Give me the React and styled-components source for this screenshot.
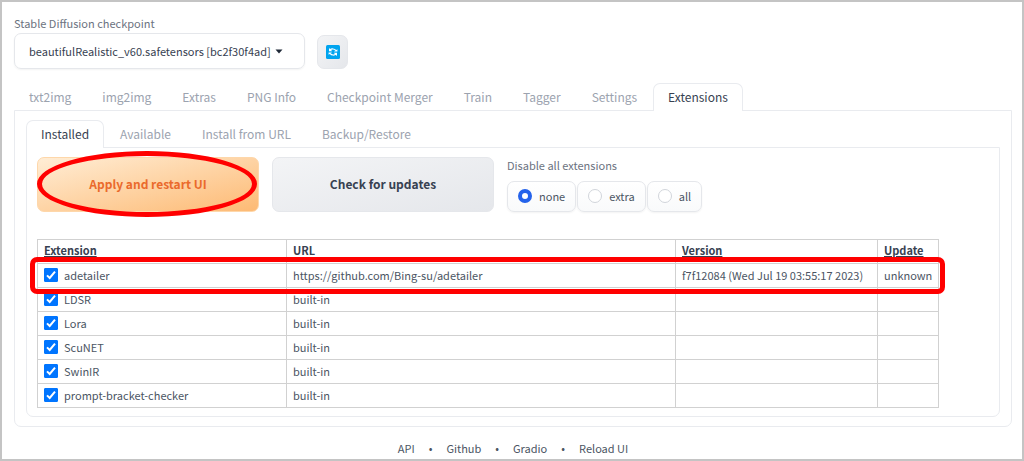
import React, { useState } from "react";
import styled, { createGlobalStyle, css } from "styled-components";

const GlobalStyle = createGlobalStyle`
  *, *::before, *::after { box-sizing: border-box; }
  body {
    margin: 0;
    background: #fff;
    color: #4b5563;
    font-family: "Source Sans Pro", "Noto Sans CJK JP", "Noto Sans", sans-serif;
    font-size: 11px;
    line-height: 16px;
  }
  button, select, input { font: inherit; color: inherit; margin: 0; }
`;

const Page = styled.div`
  min-height: 100vh;
  border: 2px solid #c4c4c4;
  padding: 13px 10px 3px 12px;
`;

const TopBar = styled.div`
  display: flex;
  align-items: flex-end;
  gap: 12px;
`;

const Label = styled.label`
  display: block;
  color: #6b7280;
`;

const SelectFrame = styled.div`
  display: grid;
  align-items: center;
  margin-top: 2px;
  border: 1px solid #e5e7eb;
  border-radius: 7px;
  box-shadow: 0 1px 2px rgba(0, 0, 0, 0.05);
  width: 291px;
  height: 36px;
`;

const Select = styled.select`
  grid-area: 1 / 1;
  appearance: none;
  height: 100%;
  width: 100%;
  border: 0;
  background: transparent;
  padding: 0 24px 1px 14px;
  color: #374151;
`;

const Caret = styled.svg`
  grid-area: 1 / 1;
  justify-self: end;
  margin-right: 21px;
  pointer-events: none;
`;

const RefreshButton = styled.button`
  display: grid;
  place-items: center;
  width: 31px;
  height: 34px;
  padding: 0;
  border: 1px solid #e5e7eb;
  border-radius: 7px;
  background: linear-gradient(to bottom right, #f3f4f6, #e5e7eb);
`;

const TabList = styled.div`
  display: flex;
  gap: 1px;
  position: relative;
  margin-bottom: -1px;
`;

const Tab = styled.button`
  height: 28px;
  padding: 0 14px 1px;
  border: 1px solid transparent;
  border-bottom: 0;
  border-radius: 7px 7px 0 0;
  background: transparent;
  color: #9ca3af;
  font-size: 12px;
  white-space: nowrap;
  ${(p) =>
    p["aria-selected"] &&
    css`
      border-color: #e9ebef;
      background: #fff;
      color: #374151;
    `}
`;

const Panel = styled.section`
  border: 1px solid #e9ebef;
  border-radius: 0 0 7px 7px;
  padding: ${(p) => (p.$inner ? "9px 10px 8px" : "9px 11px")};
`;

const MainTabs = styled.div`
  margin-top: 14px;
`;

const Actions = styled.div`
  display: grid;
  grid-template-columns: 222px 222px 1fr;
  gap: 13px;
`;

const ActionButton = styled.button`
  position: relative;
  height: 55px;
  padding-bottom: 2px;
  border-radius: 7px;
  font-size: 12px;
  font-weight: 700;
  border: 1px solid ${(p) => (p.$primary ? "#fed7aa" : "#e5e7eb")};
  color: ${(p) => (p.$primary ? "#ea6a2c" : "#374151")};
  background: ${(p) =>
    p.$primary
      ? "linear-gradient(to bottom right, #ffedd5, #fdba74)"
      : "linear-gradient(to bottom right, #f3f4f6, #e5e7eb)"};
`;

const EllipseMark = styled.span`
  position: absolute;
  inset: -7px 1px -6px -1px;
  border: 5px solid #f00;
  border-radius: 50%;
  pointer-events: none;
`;

const RadioGroup = styled.fieldset`
  border: 0;
  margin: 0;
  padding: 0;
  min-width: 0;
`;

const Legend = styled.legend`
  padding: 0;
  color: #6b7280;
`;

const Choices = styled.div`
  display: flex;
  gap: 1px;
  margin-top: 8px;
`;

const Choice = styled.label`
  display: flex;
  align-items: center;
  gap: 7px;
  height: 31px;
  padding: 0 10px 1px;
  border: 1px solid #e5e7eb;
  border-radius: 7px;
  background: linear-gradient(to top, #f9fafb, #fff);
  box-shadow: 0 1px 2px rgba(0, 0, 0, 0.05);
  color: #4b5563;
`;

const Radio = styled.input`
  appearance: none;
  width: 14px;
  height: 14px;
  border: 1px solid #d1d5db;
  border-radius: 50%;
  background: #fff;
  &:checked {
    border: 4px solid #2563eb;
  }
`;

const TableArea = styled.div`
  position: relative;
  margin: 27px 50px 0 0;
`;

const Table = styled.table`
  width: 100%;
  border-collapse: collapse;
  table-layout: fixed;
`;

const Column = styled.col`
  width: ${(p) => p.$width};
`;

const cell = css`
  height: 24px;
  padding: 0 6px 1px;
  border: 1px solid #d1d1d1;
  text-align: left;
  white-space: nowrap;
`;

const HeadCell = styled.th`
  ${cell}
  padding-bottom: 4px;
  color: #374151;
  text-decoration: ${(p) => (p.$sortable ? "underline" : "none")};
  text-underline-offset: 1px;
`;

const Cell = styled.td`
  ${cell}
`;

const CheckLabel = styled.label`
  display: flex;
  align-items: center;
  gap: 6px;
`;

const CheckFrame = styled.span`
  display: grid;
  width: 14px;
  height: 14px;
`;

const CheckInput = styled.input`
  grid-area: 1 / 1;
  appearance: none;
  width: 14px;
  height: 14px;
  border: 1px solid #9ca3af;
  border-radius: 1px;
  &:checked {
    border-color: #0075ff;
    background: #0075ff;
  }
`;

const CheckMark = styled.svg`
  grid-area: 1 / 1;
  pointer-events: none;
`;

const RowMark = styled.div`
  position: absolute;
  top: 18px;
  left: -7px;
  right: -6px;
  height: 37px;
  border: 5px solid #f00;
  border-radius: 7px;
  pointer-events: none;
`;

const Footer = styled.footer`
  display: flex;
  justify-content: center;
  gap: 14px;
  margin-top: 13px;
`;

const FooterLink = styled.a`
  color: #4b5563;
  text-decoration: none;
`;

const mainTabs = ["txt2img", "img2img", "Extras", "PNG Info", "Checkpoint Merger", "Train", "Tagger", "Settings", "Extensions"];
const subTabs = ["Installed", "Available", "Install from URL", "Backup/Restore"];
const extensions = [
  { name: "adetailer", url: "https://github.com/Bing-su/adetailer", version: "f7f12084 (Wed Jul 19 03:55:17 2023)", update: "unknown" },
  { name: "LDSR", url: "built-in" },
  { name: "Lora", url: "built-in" },
  { name: "ScuNET", url: "built-in" },
  { name: "SwinIR", url: "built-in" },
  { name: "prompt-bracket-checker", url: "built-in" },
];
const links = ["API", "Github", "Gradio", "Reload UI"];

function Tabs({ items, value, onChange, label }) {
  return (
    <TabList role="tablist" aria-label={label}>
      {items.map((item) => (
        <Tab key={item} type="button" role="tab" aria-selected={item === value} onClick={() => onChange(item)}>
          {item}
        </Tab>
      ))}
    </TabList>
  );
}

function ExtensionCheck({ name }) {
  return (
    <CheckLabel>
      <CheckFrame>
        <CheckInput type="checkbox" defaultChecked />
        <CheckMark width="14" height="14" viewBox="0 0 14 14" fill="none" aria-hidden="true">
          <path d="M3 7.4 5.7 10 11 3.6" stroke="#fff" strokeWidth="2" />
        </CheckMark>
      </CheckFrame>
      {name}
    </CheckLabel>
  );
}

export default function App() {
  const [tab, setTab] = useState("Extensions");
  const [subTab, setSubTab] = useState("Installed");
  const [disabled, setDisabled] = useState("none");

  return (
    <>
      <GlobalStyle />
      <Page>
        <TopBar>
          <div>
            <Label htmlFor="checkpoint">Stable Diffusion checkpoint</Label>
            <SelectFrame>
              <Select id="checkpoint">
                <option>beautifulRealistic_v60.safetensors [bc2f30f4ad]</option>
              </Select>
              <Caret width="8" height="5" viewBox="0 0 8 5" aria-hidden="true">
                <path d="M0.5 0.5h7L4 4.5z" fill="#1f2937" />
              </Caret>
            </SelectFrame>
          </div>
          <RefreshButton type="button" aria-label="Refresh checkpoints">
            <svg width="14" height="14" viewBox="0 0 14 14" fill="none" aria-hidden="true">
              <rect width="14" height="14" rx="1.5" fill="#00a4ef" />
              <path d="M4 5.2C5.2 3.6 8.6 3.4 9.8 5.6M10 8.8C8.8 10.4 5.4 10.6 4.2 8.4" stroke="#fff" strokeWidth="1.2" />
              <path d="M3 3v3.3h3.3zM11 11V7.7H7.7zM8 6.4h3.4V4.2zM6 7.6H2.6v2.2z" fill="#fff" />
            </svg>
          </RefreshButton>
        </TopBar>

        <MainTabs>
          <Tabs items={mainTabs} value={tab} onChange={setTab} label="Main" />
          <Panel role="tabpanel">
            <Tabs items={subTabs} value={subTab} onChange={setSubTab} label="Extensions" />
            <Panel $inner role="tabpanel">
              <Actions>
                <ActionButton type="button" $primary>
                  Apply and restart UI
                  <EllipseMark />
                </ActionButton>
                <ActionButton type="button">Check for updates</ActionButton>
                <RadioGroup>
                  <Legend>Disable all extensions</Legend>
                  <Choices>
                    {["none", "extra", "all"].map((choice) => (
                      <Choice key={choice}>
                        <Radio type="radio" name="disable" checked={disabled === choice} onChange={() => setDisabled(choice)} />
                        {choice}
                      </Choice>
                    ))}
                  </Choices>
                </RadioGroup>
              </Actions>

              <TableArea>
                <Table>
                  <colgroup>
                    <Column $width="249px" />
                    <Column />
                    <Column $width="202px" />
                    <Column $width="61px" />
                  </colgroup>
                  <thead>
                    <tr>
                      <HeadCell $sortable>Extension</HeadCell>
                      <HeadCell>URL</HeadCell>
                      <HeadCell $sortable>Version</HeadCell>
                      <HeadCell $sortable>Update</HeadCell>
                    </tr>
                  </thead>
                  <tbody>
                    {extensions.map((ext) => (
                      <tr key={ext.name}>
                        <Cell><ExtensionCheck name={ext.name} /></Cell>
                        <Cell>{ext.url}</Cell>
                        <Cell>{ext.version}</Cell>
                        <Cell>{ext.update}</Cell>
                      </tr>
                    ))}
                  </tbody>
                </Table>
                <RowMark />
              </TableArea>
            </Panel>
          </Panel>
        </MainTabs>

        <Footer>
          {links.map((link, i) => (
            <React.Fragment key={link}>
              {i > 0 && <span aria-hidden="true">•</span>}
              <FooterLink href="#">{link}</FooterLink>
            </React.Fragment>
          ))}
        </Footer>
      </Page>
    </>
  );
}
